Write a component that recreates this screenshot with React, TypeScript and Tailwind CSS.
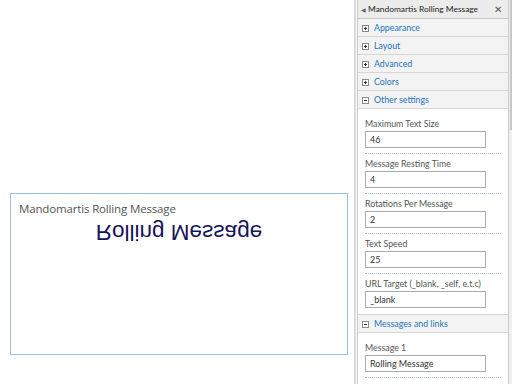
import React from "react";

type Field = { label: string; value: string };

const otherFields: Field[] = [
  { label: "Maximum Text Size", value: "46" },
  { label: "Message Resting Time", value: "4" },
  { label: "Rotations Per Message", value: "2" },
  { label: "Text Speed", value: "25" },
  { label: "URL Target (_blank, _self, e.t.c)", value: "_blank" },
];

const Toggle = ({ open }: { open?: boolean }) => (
  <span className="relative w-[7px] h-[7px] border border-[#8a8a8a] bg-white shrink-0">
    <span className="absolute left-[1px] top-[2px] w-[3px] h-px bg-[#333]" />
    {!open && <span className="absolute left-[2px] top-[1px] w-px h-[3px] bg-[#333]" />}
  </span>
);

const SectionRow = ({ title, open }: { title: string; open?: boolean }) => (
  <div className="h-[18px] flex items-center gap-[5px] pl-[4px] pt-px bg-[#f3f3f3] border-b border-[#d6d6d6]">
    <Toggle open={open} />
    <span className="text-[8.8px] text-[#1e73be] leading-none">{title}</span>
  </div>
);

const FieldBlock = ({ f, last }: { f: Field; last?: boolean }) => (
  <div className="pl-[7px] pr-[7px]">
    <div className="h-[12px] flex items-center text-[8.8px] text-[#555] leading-none whitespace-nowrap">{f.label}</div>
    <div className="mt-[1px] w-[121px] h-[17px] border border-[#ababab] bg-white flex items-center pl-[4px] text-[9px] text-[#333] leading-none">
      {f.value}
    </div>
    {!last && <div className="mt-[5px] mb-[4px] border-b border-dotted border-[#9fb3dc]" />}
  </div>
);

export default function App() {
  return (
    <div className="w-[512px] h-[384px] flex bg-white overflow-hidden font-['Lato','Open_Sans',sans-serif]">
      {/* page area */}
      <div className="w-[354px] shrink-0 pt-[193px] pl-[10px]">
        <div className="w-[338px] h-[162px] border border-[#99c2e4] pt-[7px] pl-[8px]">
          <div className="text-[11.5px] text-[#555] leading-[15px] font-['Open_Sans',sans-serif] tracking-[-0.15px]">
            Mandomartis Rolling Message
          </div>
          <div className="flex justify-center pr-[8px] mt-[2px]">
            <div className="-scale-y-100 text-[22.5px] leading-[28px] text-[#141457] font-['Liberation_Sans',sans-serif]">
              Rolling Message
            </div>
          </div>
        </div>
      </div>

      {/* tool pane edge */}
      <div className="w-[2px] bg-[#dadada] shrink-0" />
      <div className="w-[1px] shrink-0" />

      {/* tool pane */}
      <div className="w-[152px] shrink-0 border-x border-[#c8c8c8] flex flex-col">
        <div className="h-[19px] flex items-center bg-[#ececec] border-b border-[#c6c6c6] pl-[3px] pr-[6px]">
          <span className="text-[6px] text-[#666] mr-[2px]">◀</span>
          <span className="flex-1 text-[8.4px] text-[#222] leading-none whitespace-nowrap">Mandomartis Rolling Message</span>
          <span className="text-[10px] text-[#555] leading-none">✕</span>
        </div>
        <SectionRow title="Appearance" />
        <SectionRow title="Layout" />
        <SectionRow title="Advanced" />
        <SectionRow title="Colors" />
        <SectionRow title="Other settings" open />
        <div className="pt-[9px] pb-[6px]">
          {otherFields.map((f, i) => (
            <FieldBlock key={f.label} f={f} last={i === otherFields.length - 1} />
          ))}
        </div>
        <div className="border-t border-[#d6d6d6]">
          <SectionRow title="Messages and links" open />
        </div>
        <div className="pt-[9px]">
          <FieldBlock f={{ label: "Message 1", value: "Rolling Message" }} />
        </div>
      </div>

      {/* scrollbar */}
      <div className="flex-1 bg-[#f0f0f0] flex justify-center">
        <div className="w-[2px] h-[130px] bg-[#c6c6c6]" />
      </div>
    </div>
  );
}
